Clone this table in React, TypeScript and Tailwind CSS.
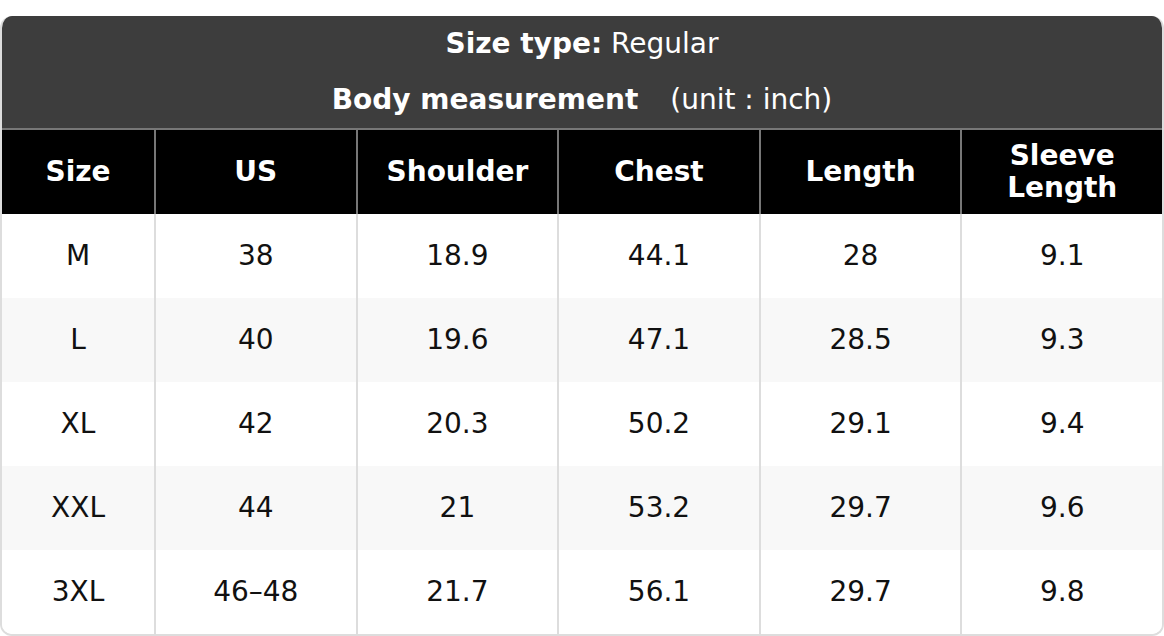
const columns = ["Size", "US", "Shoulder", "Chest", "Length", "Sleeve Length"];

const rows = [
  ["M", "38", "18.9", "44.1", "28", "9.1"],
  ["L", "40", "19.6", "47.1", "28.5", "9.3"],
  ["XL", "42", "20.3", "50.2", "29.1", "9.4"],
  ["XXL", "44", "21", "53.2", "29.7", "9.6"],
  ["3XL", "46–48", "21.7", "56.1", "29.7", "9.8"],
];

export default function App() {
  return (
    <div className="min-h-screen bg-white pt-4 font-['DejaVu_Sans',sans-serif] text-[28px]">
      <div className="overflow-hidden rounded-xl border-2 border-t-0 border-[#dddddd]">
        <div className="flex flex-col items-center gap-6 bg-[#3d3d3d] py-3 leading-8 text-white">
          <div>
            <span className="font-bold">Size type:</span> Regular
          </div>
          <div>
            <span className="font-bold">Body measurement</span>
            <span className="ml-8">(unit : inch)</span>
          </div>
        </div>
        <div className="grid grid-cols-[152px_repeat(5,1fr)] border-t-2 border-[#777777] bg-black text-white">
          {columns.map((c, i) => (
            <div
              key={c}
              className={
                "flex h-[84px] items-center justify-center px-2 text-center font-bold leading-8 " +
                (i > 0 ? "border-l-2 border-[#777777]" : "")
              }
            >
              {c === "Sleeve Length" ? (
                <span>
                  Sleeve
                  <br />
                  Length
                </span>
              ) : (
                c
              )}
            </div>
          ))}
        </div>
        {rows.map((r, ri) => (
          <div
            key={r[0]}
            className={
              "grid grid-cols-[152px_repeat(5,1fr)] text-[#111111] " +
              (ri % 2 === 1 ? "bg-[#f8f8f8]" : "bg-white")
            }
          >
            {r.map((v, i) => (
              <div
                key={i}
                className={
                  "flex h-[84px] items-center justify-center " +
                  (i > 0 ? "border-l-2 border-[#dddddd]" : "")
                }
              >
                {v}
              </div>
            ))}
          </div>
        ))}
      </div>
    </div>
  );
}
